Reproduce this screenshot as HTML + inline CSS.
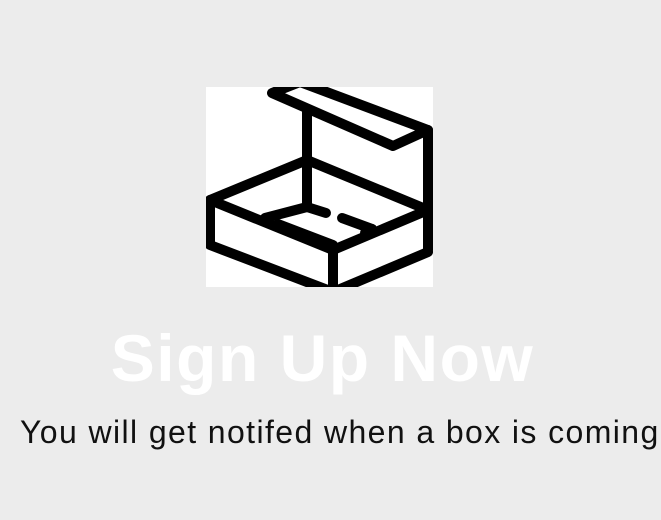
<!DOCTYPE html>
<html><head><style>
html,body{margin:0;padding:0;width:661px;height:520px;background:#ececec;overflow:hidden;font-family:"Liberation Sans",sans-serif;}
.sq{position:absolute;left:206px;top:87px;width:227px;height:200px;background:#fff;overflow:hidden;}
h1{position:absolute;left:0;width:645px;top:320px;margin:0;text-align:center;color:#fff;font-size:66px;font-weight:bold;line-height:76px;white-space:nowrap;letter-spacing:1.5px;}
p{position:absolute;left:20px;top:412px;margin:0;font-size:32px;line-height:40px;color:#111;white-space:nowrap;letter-spacing:1.4px;}
</style></head><body>
<div class="sq">
<svg width="227" height="200" viewBox="206 87 227 200" xmlns="http://www.w3.org/2000/svg" fill="none" stroke="#000" stroke-width="10" stroke-linecap="round" stroke-linejoin="round">
<path d="M272 93 L300 82 L428 130 L393 146 Z"/>
<path d="M307 110 V207"/>
<path d="M428 130 V250"/>
<path d="M210 200 L307 160 L428 210 L333 250 Z"/>
<path d="M210 200 V245 L333 292 L428 252"/>
<path d="M333 250 V292"/>
<path d="M307 207 L265 218"/>
<path d="M278 224 L333 245"/>
<path d="M307 207 L326 213"/>
<path d="M342 218 L372 229"/>
<path d="M372 229 L365 233"/>
</svg>
</div>
<h1>Sign Up Now</h1>
<p>You will get notifed when a box is coming</p>
</body></html>
